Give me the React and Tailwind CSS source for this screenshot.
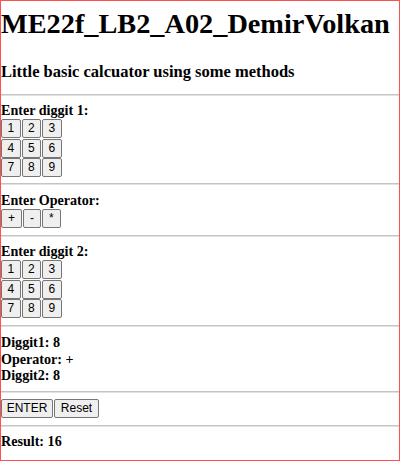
import React from "react";

const serif = { fontFamily: '"Liberation Serif", "Times New Roman", serif' };

function Btn({ children, className = "" }) {
  return (
    <button
      className={
        "h-[19px] px-[6px] bg-[#efefef] border border-[#767676] rounded-[2px] text-[12px] leading-[13px] text-black flex items-center justify-center " +
        className
      }
      style={{ fontFamily: '"Liberation Sans", Arial, sans-serif' }}
    >
      {children}
    </button>
  );
}

function Hr({ className = "" }) {
  return (
    <div className={"h-[2px] w-full flex flex-col " + className}>
      <div className="h-[1px] bg-[#c4c4c4]" />
      <div className="h-[1px] bg-[#e2e2e2]" />
    </div>
  );
}

function Pad() {
  const rows = [
    ["1", "2", "3"],
    ["4", "5", "6"],
    ["7", "8", "9"],
  ];
  return (
    <div className="flex flex-col gap-[0.5px]">
      {rows.map((r) => (
        <div key={r[0]} className="flex gap-[1px]">
          {r.map((d) => (
            <Btn key={d} className="w-[19.5px] px-0">
              {d}
            </Btn>
          ))}
        </div>
      ))}
    </div>
  );
}

export default function App() {
  return (
    <div
      className="w-[400px] h-[461px] box-border border border-[#ff5050] bg-white text-black overflow-hidden flex flex-col"
      style={serif}
    >
      <h1 className="mt-[7px] text-[28.3px] leading-[32px] font-bold">
        ME22f_LB2_A02_DemirVolkan
      </h1>
      <h3 className="mt-[22px] text-[16.5px] leading-[19px] font-bold">
        Little basic calcuator using some methods
      </h3>
      <Hr className="mt-[13px]" />

      <div className="mt-[6px] text-[14.1px] leading-[16px] font-bold">Enter diggit 1:</div>
      <div className="mt-[1px]">
        <Pad />
      </div>
      <Hr className="mt-[6px]" />

      <div className="mt-[7px] text-[14.1px] leading-[16px] font-bold">Enter Operator:</div>
      <div className="mt-[1px] flex gap-[1px]">
        <Btn>+</Btn>
        <Btn>-</Btn>
        <Btn>*</Btn>
      </div>
      <Hr className="mt-[7px]" />

      <div className="mt-[6px] text-[14.1px] leading-[16px] font-bold">Enter diggit 2:</div>
      <div className="mt-[1px]">
        <Pad />
      </div>
      <Hr className="mt-[7px]" />

      <div className="mt-[7px] text-[14.1px] leading-[16.5px] font-bold">
        <div>Diggit1: 8</div>
        <div>Operator: +</div>
        <div>Diggit2: 8</div>
      </div>
      <Hr className="mt-[7px]" />

      <div className="mt-[6px] flex gap-[1px]">
        <Btn className="w-[52px]">ENTER</Btn>
        <Btn className="w-[45px]">Reset</Btn>
      </div>
      <Hr className="mt-[7px]" />

      <div className="mt-[6px] text-[14.1px] leading-[16px] font-bold">Result: 16</div>
    </div>
  );
}
